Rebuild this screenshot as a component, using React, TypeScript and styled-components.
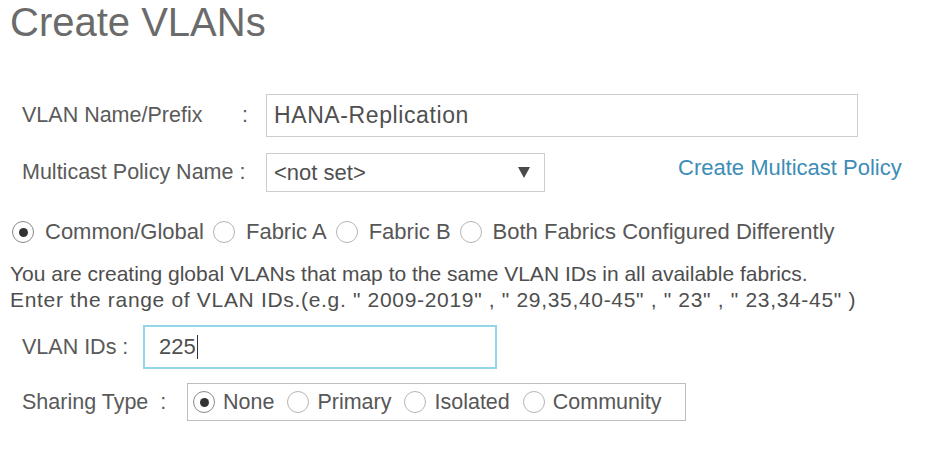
import React from 'react';
import styled, {createGlobalStyle} from 'styled-components';

const GlobalStyle = createGlobalStyle`
	html, body {
		margin     : 0;
		padding    : 0;
		background : #ffffff;
	}
	body {
		font-family : "Liberation Sans", Arial, sans-serif;
		color       : #575757;
	}
`;

const Page = styled.div`
	display        : flex;
	flex-direction : column;
	width          : 941px;
	height         : 476px;
	overflow       : hidden;
`;
const Title = styled.h1`
	margin      : 0 0 0 10px;
	font-size   : 40px;
	font-weight : 400;
	line-height : 45px;
	color       : #6b6b6b;
`;
const FormRow = styled.div<{ $top: number; }>`
	display     : flex;
	align-items : center;
	margin-top  : ${p => p.$top}px;
	padding-left: 22px;
`;
const Label = styled.label<{ $width: number; }>`
	display         : flex;
	justify-content : space-between;
	flex-shrink     : 0;
	width           : ${p => p.$width}px;
	font-size       : 21.5px;
	white-space     : pre;
	color           : #5a5a5a;
`;
const TextBox = styled.div<{ $width: number; $height: number; $focused?: boolean; }>`
	display        : flex;
	align-items    : center;
	box-sizing     : border-box;
	width          : ${p => p.$width}px;
	height         : ${p => p.$height}px;
	padding        : 0 ${p => p.$focused ? 14 : 7}px;
	border         : ${p => p.$focused ? '2px solid #93d6ec' : '1px solid #cdcdcd'};
	font-size      : ${p => p.$focused ? 22 : 23}px;
	letter-spacing : ${p => p.$focused ? 0 : 0.6}px;
	color          : #505050;
`;
const Caret = styled.span`
	display     : inline-block;
	width       : 1px;
	height      : 24px;
	margin-left : 1px;
	background  : #333333;
`;
const Select = styled.div`
	display         : flex;
	align-items     : center;
	justify-content : space-between;
	box-sizing      : border-box;
	width           : 279px;
	height          : 39px;
	padding         : 0 14px 0 7px;
	border          : 1px solid #cdcdcd;
	font-size       : 22px;
	color           : #505050;
`;
const Arrow = styled.span`
	width        : 0;
	height       : 0;
	border-left  : 6px solid transparent;
	border-right : 6px solid transparent;
	border-top   : 11px solid #4a4a4a;
`;
const Link = styled.a`
	margin-left     : 133px;
	margin-top      : -10px;
	font-size       : 22px;
	color           : #3d8db7;
	text-decoration : none;
	cursor          : pointer;
`;
const RadioRow = styled.div`
	display     : flex;
	align-items : center;
	height      : 26px;
	margin-top  : 27px;
	padding-left: 12px;
`;
const Radio = styled.span<{ $checked?: boolean; }>`
	display         : inline-flex;
	align-items     : center;
	justify-content : center;
	flex-shrink     : 0;
	box-sizing      : border-box;
	width           : 22px;
	height          : 22px;
	border-radius   : 50%;
	border          : 1px solid ${p => p.$checked ? '#8a8a8a' : '#b5b5b5'};
	background      : #ffffff;
	&::after {
		content       : '';
		display       : ${p => p.$checked ? 'block' : 'none'};
		width         : 9px;
		height        : 9px;
		border-radius : 50%;
		background    : #333333;
	}
`;
const Option = styled.label<{ $gap: number; $after: number; $size: number; }>`
	display      : inline-flex;
	align-items  : center;
	gap          : ${p => p.$gap}px;
	margin-right : ${p => p.$after}px;
	font-size    : ${p => p.$size}px;
	color        : #575757;
	white-space  : nowrap;
`;
const Description = styled.p`
	margin      : 16px 0 0 10px;
	font-size   : 21px;
	line-height : 26px;
	color       : #4e4e4e;
	white-space : nowrap;
`;
const Example = styled.span`
	letter-spacing : 0.68px;
`;
const SharingBox = styled.div`
	display     : flex;
	align-items : center;
	box-sizing  : border-box;
	width       : 499px;
	height      : 38px;
	padding-left: 5px;
	border      : 1px solid #bdbdbd;
`;

const fabricOptions = [
	{label: 'Common/Global', checked: true},
	{label: 'Fabric A'},
	{label: 'Fabric B'},
	{label: 'Both Fabrics Configured Differently'}
];
const sharingOptions = [
	{label: 'None', checked: true},
	{label: 'Primary'},
	{label: 'Isolated'},
	{label: 'Community'}
];

export default function App() {
	return <Page>
		<GlobalStyle/>
		<Title>Create VLANs</Title>
		<FormRow $top={49}>
			<Label $width={244}><span>VLAN Name/Prefix</span><span>:   </span></Label>
			<TextBox $width={592} $height={43}>HANA-Replication</TextBox>
		</FormRow>
		<FormRow $top={16}>
			<Label $width={244}><span>Multicast Policy Name :</span></Label>
			<Select><span>&lt;not set&gt;</span><Arrow/></Select>
			<Link>Create Multicast Policy</Link>
		</FormRow>
		<RadioRow>
			{fabricOptions.map(o => <Option key={o.label} $gap={11} $after={9} $size={22}>
				<Radio $checked={o.checked}/>{o.label}
			</Option>)}
		</RadioRow>
		<Description>
			You are creating global VLANs that map to the same VLAN IDs in all available fabrics.<br/>
			<Example>Enter the range of VLAN IDs.(e.g. " 2009-2019" , " 29,35,40-45" , " 23" , " 23,34-45" )</Example>
		</Description>
		<FormRow $top={12}>
			<Label $width={121}>VLAN IDs :</Label>
			<TextBox $width={354} $height={44} $focused>225<Caret/></TextBox>
		</FormRow>
		<FormRow $top={14}>
			<Label $width={165}>Sharing Type  :</Label>
			<SharingBox>
				{sharingOptions.map(o => <Option key={o.label} $gap={8} $after={13} $size={21.5}>
					<Radio $checked={o.checked}/>{o.label}
				</Option>)}
			</SharingBox>
		</FormRow>
	</Page>;
}
